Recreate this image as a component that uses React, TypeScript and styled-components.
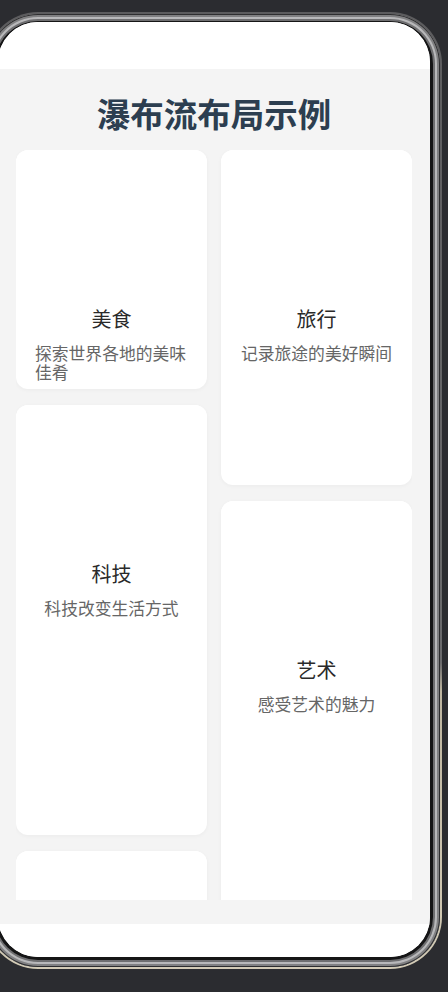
import React from "react";
import styled, { createGlobalStyle } from "styled-components";

const GlobalStyle = createGlobalStyle`
  html, body {
    margin: 0;
    padding: 0;
    background: #2b2c30;
    overflow: hidden;
    font-family: "Noto Sans CJK SC", "Noto Sans", sans-serif;
  }
  * { box-sizing: border-box; }
`;

const Frame = styled.div`
  width: 456px;
  height: 957px;
  margin: 12px 0 0 -14px;
  padding: 2px;
  border-radius: 52px;
  background: linear-gradient(
    180deg,
    #5c5c5e 0%,
    #6a6a6c 68%,
    #bdb5a0 71%,
    #d3cbb6 100%
  );
`;

const Bezel = styled.div`
  height: 100%;
  padding: 8px 10px 10px 10px;
  border-radius: 50px;
  background: #151516;
  box-shadow:
    inset 0 0 0 1px #2e2e30,
    inset 0 0 0 3px #808082,
    inset 0 0 0 5px #b8b8ba,
    inset 0 0 0 7px #6e6e70;
`;

const Screen = styled.div`
  height: 100%;
  display: flex;
  flex-direction: column;
  background: #ffffff;
  border-radius: 40px;
  overflow: hidden;
`;

const StatusArea = styled.div`
  height: 47px;
  flex-shrink: 0;
  background: #ffffff;
`;

const Main = styled.main`
  flex: 1;
  min-height: 0;
  display: flex;
  flex-direction: column;
  padding: 0 18px 24px;
  background: #f4f4f4;
`;

const Title = styled.h1`
  margin: 25px 0 18px;
  font-size: 33.5px;
  line-height: 38px;
  font-weight: 700;
  color: #2c3e50;
  text-align: center;
`;

const Masonry = styled.div`
  flex: 1;
  min-height: 0;
  overflow: hidden;
  display: flex;
  gap: 14px;
  align-items: flex-start;
`;

const Column = styled.div`
  flex: 1;
  min-width: 0;
  display: flex;
  flex-direction: column;
  gap: 16px;
`;

const Card = styled.div<{ $h: number }>`
  height: ${(p) => p.$h}px;
  flex-shrink: 0;
  display: flex;
  flex-direction: column;
  background: #ffffff;
  border-radius: 12px;
  box-shadow: 0 1px 4px rgba(0, 0, 0, 0.04);
  overflow: hidden;
`;

const ImageArea = styled.div`
  height: 150px;
  flex-shrink: 0;
  background: #ffffff;
`;

const CardBody = styled.div`
  display: flex;
  flex-direction: column;
  align-items: center;
  padding: 7px 19px 0;
`;

const CardTitle = styled.h3`
  margin: 0;
  font-size: 20px;
  line-height: 24px;
  font-weight: 400;
  color: #2a2a2a;
`;

const CardDesc = styled.p`
  margin: 13px 0 0;
  font-size: 16.8px;
  line-height: 19px;
  color: #666666;
`;

const BottomArea = styled.div`
  height: 33px;
  flex-shrink: 0;
  background: #ffffff;
`;

type Item = { id: string; title?: string; desc?: string; h: number };

const left: Item[] = [
  { id: "food", title: "美食", desc: "探索世界各地的美味佳肴", h: 239 },
  { id: "tech", title: "科技", desc: "科技改变生活方式", h: 430 },
  { id: "more", h: 300 },
];

const right: Item[] = [
  { id: "travel", title: "旅行", desc: "记录旅途的美好瞬间", h: 335 },
  { id: "art", title: "艺术", desc: "感受艺术的魅力", h: 420 },
];

const renderCol = (items: Item[]) =>
  items.map((it) => (
    <Card key={it.id} $h={it.h}>
      <ImageArea />
      {it.title && (
        <CardBody>
          <CardTitle>{it.title}</CardTitle>
          <CardDesc>{it.desc}</CardDesc>
        </CardBody>
      )}
    </Card>
  ));

export default function App() {
  return (
    <>
      <GlobalStyle />
      <Frame>
        <Bezel>
          <Screen>
            <StatusArea />
            <Main>
              <Title>瀑布流布局示例</Title>
              <Masonry>
                <Column>{renderCol(left)}</Column>
                <Column>{renderCol(right)}</Column>
              </Masonry>
            </Main>
            <BottomArea />
          </Screen>
        </Bezel>
      </Frame>
    </>
  );
}
